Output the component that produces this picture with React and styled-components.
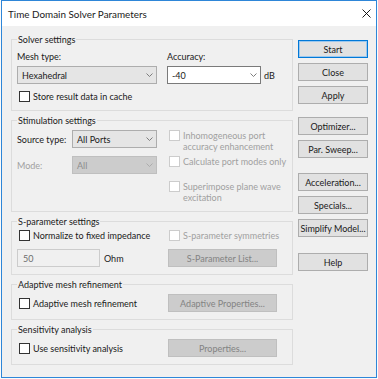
import React from "react";
import styled, { createGlobalStyle } from "styled-components";

const GlobalStyle = createGlobalStyle`
  html, body {
    margin: 0;
    padding: 0;
    background: #fbfbfb;
  }
  body {
    font-family: Lato, "Noto Sans", sans-serif;
    font-size: 9px;
    color: #1a1a1a;
  }
`;

const Window = styled.div`
  box-sizing: border-box;
  margin-left: 1px;
  width: 376px;
  height: 378px;
  border: 1px solid #2e86d8;
  display: flex;
  flex-direction: column;
  background: #f0f0f0;
`;

const TitleBar = styled.div`
  flex: none;
  height: 25px;
  display: flex;
  align-items: center;
  justify-content: space-between;
  padding: 0 5px 0 6px;
  background: #fff;
`;

const Title = styled.span`
  font-size: 9.9px;
`;

const Body = styled.div`
  flex: 1;
  display: flex;
  gap: 5px;
  padding: 7px 7px 0 9px;
`;

const LeftColumn = styled.div`
  width: 282px;
  display: flex;
  flex-direction: column;
  gap: 3px;
`;

const RightColumn = styled.div`
  width: 70px;
  display: flex;
  flex-direction: column;
  padding-top: 7px;
`;

const Group = styled.fieldset`
  margin: 0;
  min-width: 0;
  padding: ${(p) => p.$pad || "3px 5px 8px 5px"};
  border: 1px solid #dcdcdc;
`;

const Legend = styled.legend`
  padding: 0 1px;
  line-height: 13px;
`;

const TwoCols = styled.div`
  display: grid;
  grid-template-columns: 150px 1fr;
  row-gap: ${(p) => p.$rowGap || 0}px;
  align-items: ${(p) => p.$align || "center"};
`;

const Field = styled.div`
  display: flex;
  flex-direction: column;
  gap: 4px;
`;

const Label = styled.span`
  line-height: 11px;
  white-space: nowrap;
  width: ${(p) => (p.$w ? `${p.$w}px` : "auto")};
  flex: none;
  color: ${(p) => (p.$disabled ? "#a0a0a0" : "inherit")};
`;

const Row = styled.div`
  display: flex;
  align-items: center;
  gap: ${(p) => p.$gap || 0}px;
`;

const Stack = styled.div`
  display: flex;
  flex-direction: column;
  gap: ${(p) => p.$gap || 0}px;
`;

const comboLook = {
  select: { bg: "#e5e5e5", border: "#adadad", color: "#1a1a1a" },
  edit: { bg: "#fff", border: "#7a7a7a", color: "#1a1a1a" },
  disabled: { bg: "#cccccc", border: "#bfbfbf", color: "#8d8d8d" },
};

const ComboBox = styled.div`
  box-sizing: border-box;
  width: ${(p) => p.$w}px;
  height: 18px;
  flex: none;
  display: flex;
  align-items: center;
  justify-content: space-between;
  padding: 0 3px 0 4px;
  background: ${(p) => comboLook[p.$kind].bg};
  border: 1px solid ${(p) => comboLook[p.$kind].border};
  color: ${(p) => comboLook[p.$kind].color};
`;

const TextBox = styled.div`
  box-sizing: border-box;
  width: ${(p) => p.$w}px;
  height: 18px;
  display: flex;
  align-items: center;
  padding: 0 5px;
  background: #f0f0f0;
  border: 1px solid #cccccc;
  color: #6d6d6d;
`;

const CheckRow = styled.div`
  display: flex;
  align-items: flex-start;
  gap: 3px;
  line-height: 11px;
  white-space: nowrap;
  margin-top: ${(p) => p.$top || 0}px;
  color: ${(p) => (p.$disabled ? "#a0a0a0" : "inherit")};
`;

const Box = styled.span`
  flex: none;
  box-sizing: border-box;
  width: 11px;
  height: 11px;
  margin-left: 2px;
  background: #fff;
  border: 1px solid ${(p) => (p.$disabled ? "#cccccc" : "#333")};
`;

const PushButton = styled.button`
  box-sizing: border-box;
  width: ${(p) => p.$w || 70}px;
  height: 18px;
  flex: none;
  margin: ${(p) => p.$top || 0}px 0 0 ${(p) => p.$left || 0}px;
  padding: 0;
  font: inherit;
  line-height: 11px;
  white-space: nowrap;
  color: ${(p) => (p.disabled ? "#838383" : "#1a1a1a")};
  background: ${(p) => (p.disabled ? "#cccccc" : "#e1e1e1")};
  border: 1px solid
    ${(p) => (p.disabled ? "#bfbfbf" : p.$default ? "#0078d7" : "#adadad")};
  box-shadow: ${(p) => (p.$default ? "inset 0 0 0 1px #9cc8ee" : "none")};
`;

const Chevron = ({ color = "#707070" }) => (
  <svg width="7" height="4" viewBox="0 0 7 4">
    <polyline points="0.5,0.5 3.5,3.5 6.5,0.5" fill="none" stroke={color} strokeWidth="0.9" />
  </svg>
);

const CloseIcon = () => (
  <svg width="9" height="9" viewBox="0 0 9 9">
    <path d="M0.5 0.5 L8.5 8.5 M8.5 0.5 L0.5 8.5" stroke="#000" strokeWidth="0.9" />
  </svg>
);

function Check({ children, disabled, top }) {
  return (
    <CheckRow $disabled={disabled} $top={top}>
      <Box $disabled={disabled} />
      <span>{children}</span>
    </CheckRow>
  );
}

function App() {
  return (
    <>
      <GlobalStyle />
      <Window>
        <TitleBar>
          <Title>Time Domain Solver Parameters</Title>
          <CloseIcon />
        </TitleBar>
        <Body>
          <LeftColumn>
            <Group $pad="5px 5px 8px 5px">
              <Legend>Solver settings</Legend>
              <TwoCols>
                <Field>
                  <Label>Mesh type:</Label>
                  <ComboBox $w={140} $kind="select">
                    Hexahedral
                    <Chevron />
                  </ComboBox>
                </Field>
                <Field>
                  <Label>Accuracy:</Label>
                  <Row $gap={3}>
                    <ComboBox $w={94} $kind="edit">
                      -40
                      <Chevron />
                    </ComboBox>
                    <Label>dB</Label>
                  </Row>
                </Field>
              </TwoCols>
              <Check top={7}>Store result data in cache</Check>
            </Group>

            <Group>
              <Legend>Stimulation settings</Legend>
              <TwoCols $align="start">
                <Stack $gap={8}>
                  <Row>
                    <Label $w={55}>Source type:</Label>
                    <ComboBox $w={85} $kind="select">
                      All Ports
                      <Chevron />
                    </ComboBox>
                  </Row>
                  <Row>
                    <Label $w={55} $disabled>
                      Mode:
                    </Label>
                    <ComboBox $w={85} $kind="disabled">
                      All
                      <Chevron color="#a8a8a8" />
                    </ComboBox>
                  </Row>
                </Stack>
                <Stack>
                  <Check disabled>
                    Inhomogeneous port
                    <br />
                    accuracy enhancement
                  </Check>
                  <Check disabled top={4}>
                    Calculate port modes only
                  </Check>
                  <Check disabled top={14}>
                    Superimpose plane wave
                    <br />
                    excitation
                  </Check>
                </Stack>
              </TwoCols>
            </Group>

            <Group $pad="2px 5px 7px 5px">
              <Legend>S-parameter settings</Legend>
              <TwoCols $rowGap={8}>
                <Check>Normalize to fixed impedance</Check>
                <Check disabled>S-parameter symmetries</Check>
                <Row $gap={4}>
                  <TextBox $w={83}>50</TextBox>
                  <Label>Ohm</Label>
                </Row>
                <PushButton $w={109} $left={1} disabled>
                  S-Parameter List...
                </PushButton>
              </TwoCols>
            </Group>

            <Group $pad="3px 5px 7px 5px">
              <Legend>Adaptive mesh refinement</Legend>
              <TwoCols>
                <Check>Adaptive mesh refinement</Check>
                <PushButton $w={109} $left={1} disabled>
                  Adaptive Properties...
                </PushButton>
              </TwoCols>
            </Group>

            <Group $pad="3px 5px 7px 5px">
              <Legend>Sensitivity analysis</Legend>
              <TwoCols>
                <Check>Use sensitivity analysis</Check>
                <PushButton $w={109} $left={1} disabled>
                  Properties...
                </PushButton>
              </TwoCols>
            </Group>
          </LeftColumn>

          <RightColumn>
            <PushButton $default>Start</PushButton>
            <PushButton $top={5}>Close</PushButton>
            <PushButton $top={5}>Apply</PushButton>
            <PushButton $top={13}>Optimizer...</PushButton>
            <PushButton $top={5}>Par. Sweep...</PushButton>
            <PushButton $top={15}>Acceleration...</PushButton>
            <PushButton $top={5}>Specials...</PushButton>
            <PushButton $top={5}>Simplify Model...</PushButton>
            <PushButton $top={16}>Help</PushButton>
          </RightColumn>
        </Body>
      </Window>
    </>
  );
}

export default App;
